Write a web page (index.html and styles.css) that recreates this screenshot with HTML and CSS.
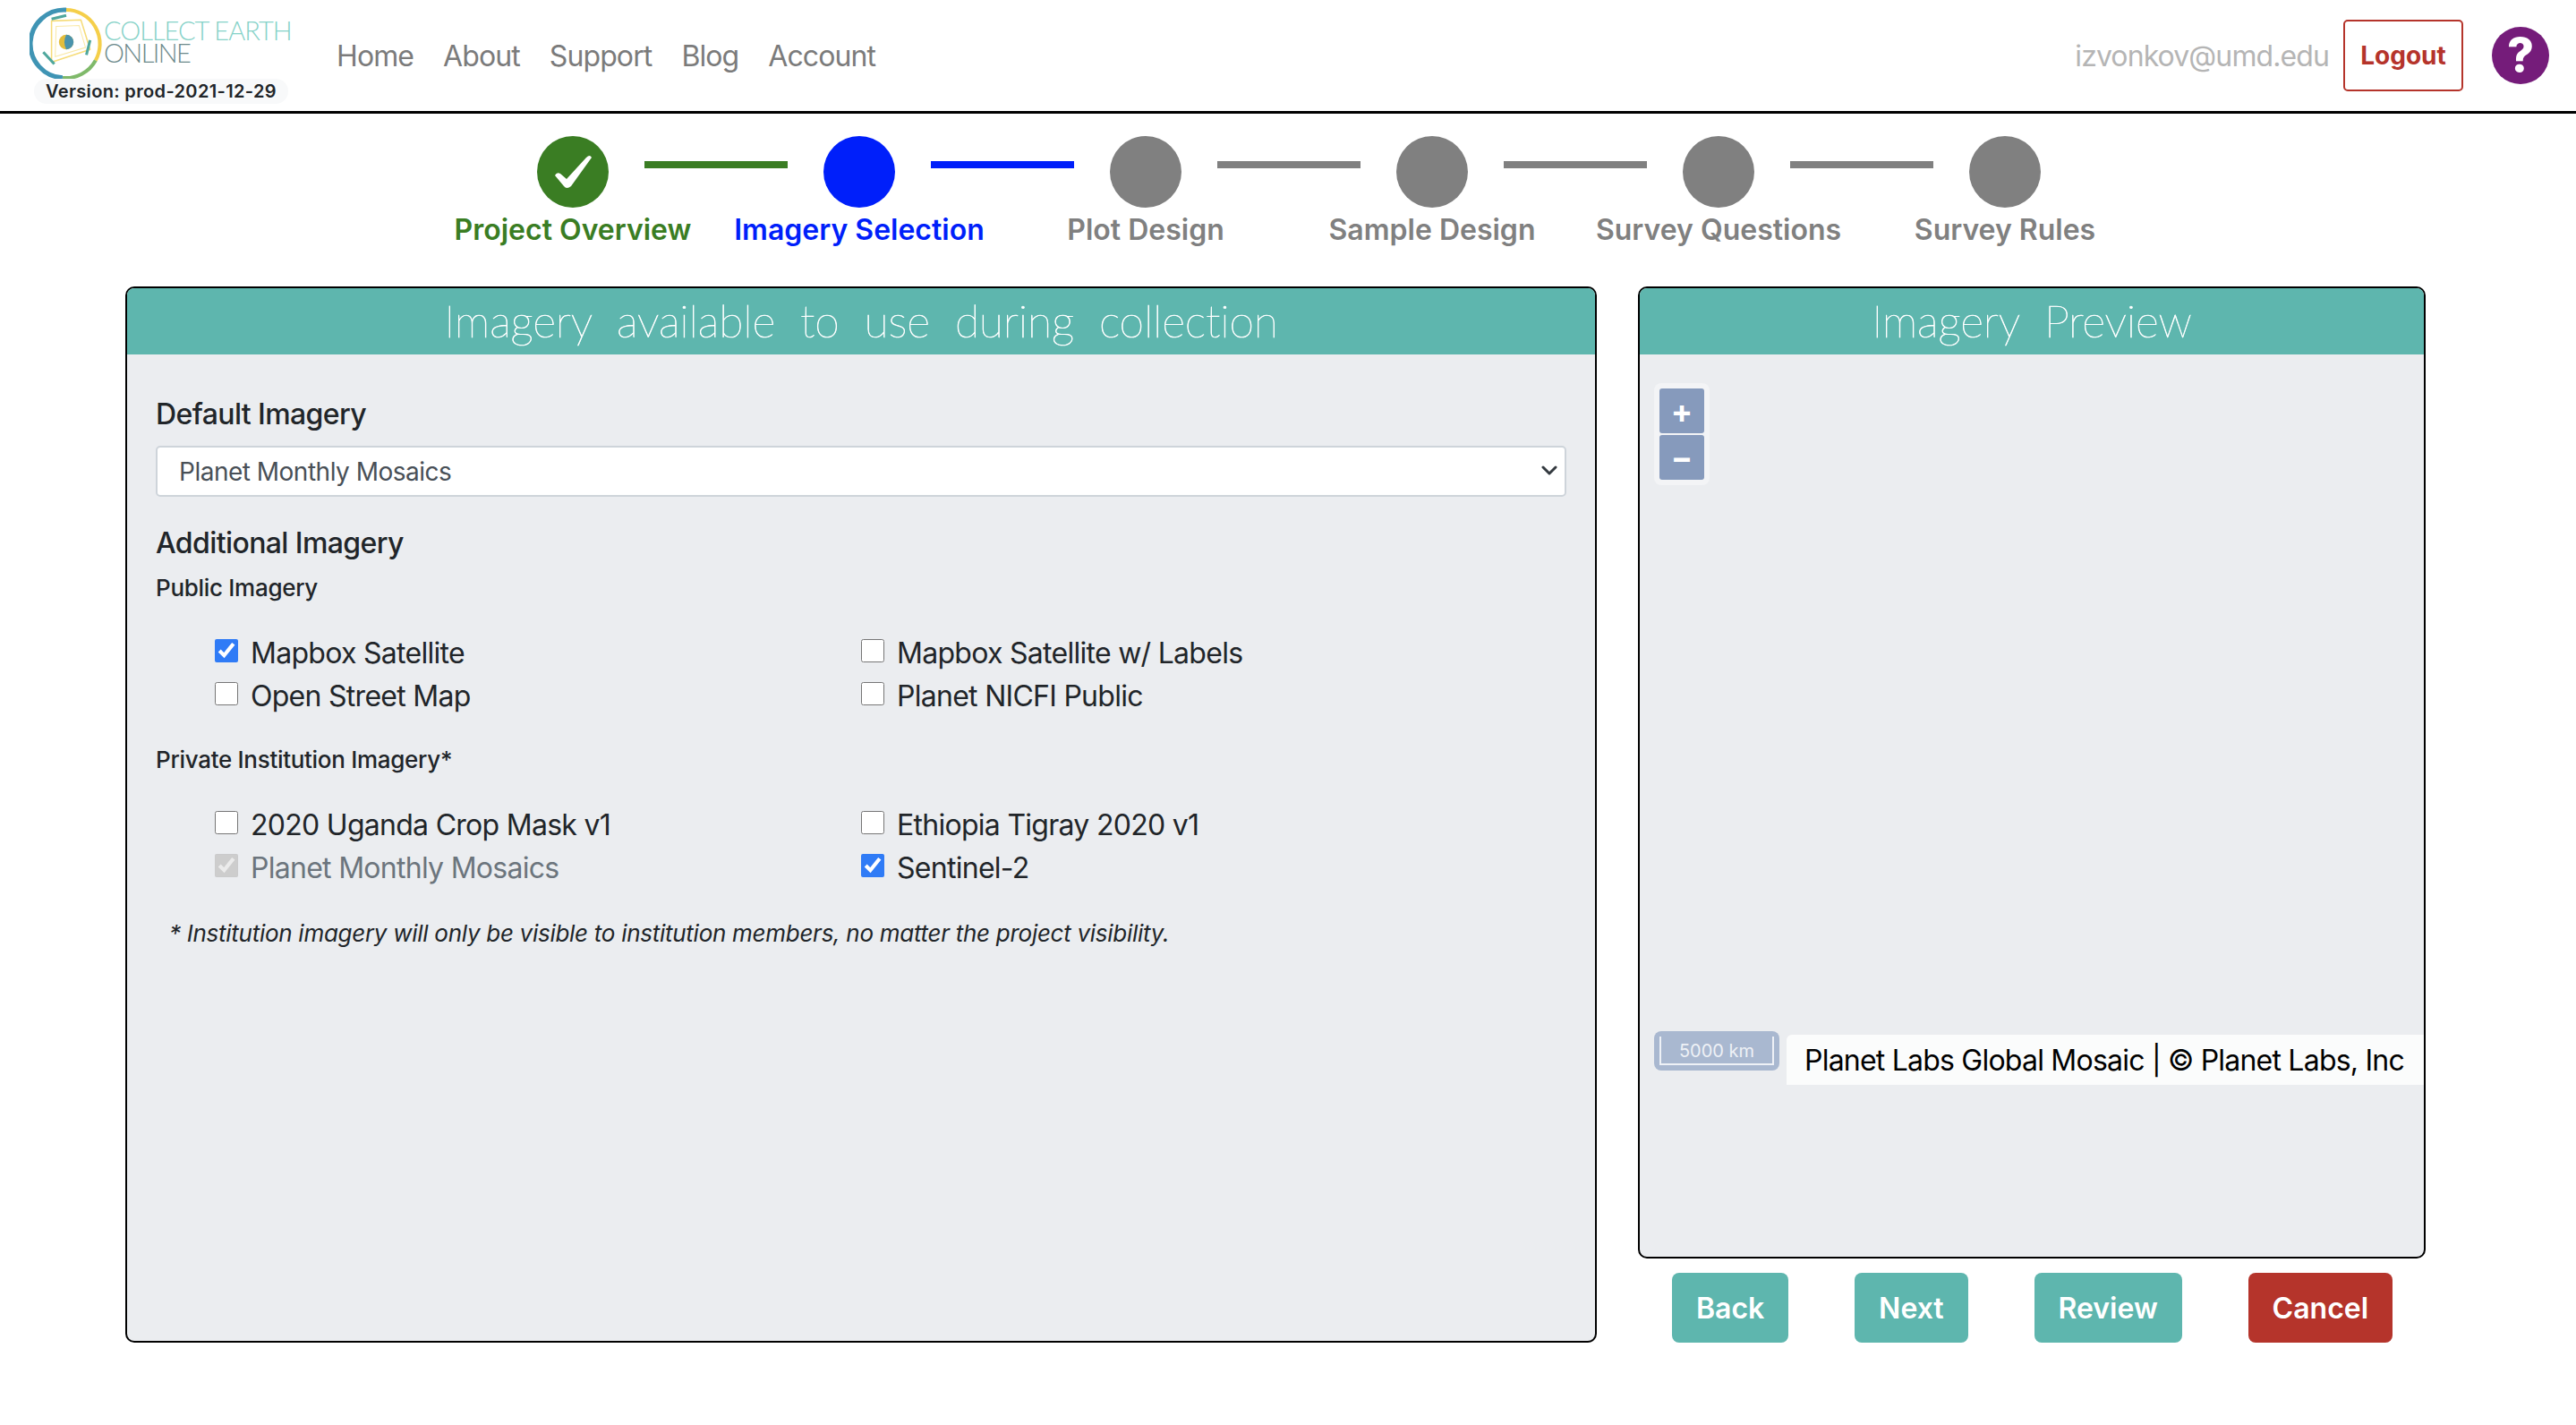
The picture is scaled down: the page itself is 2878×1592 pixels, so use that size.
FILE: index.html
```html
<!DOCTYPE html>
<html lang="en">
<head>
  <meta charset="UTF-8">
  <title>Collect Earth Online - Imagery Selection</title>
  <link rel="stylesheet" href="styles.css">
</head>
<body>

<header class="topbar">
  <div class="brand">
    <div class="brand-row">
      <svg class="brand-icon" viewBox="0 0 80 80" aria-hidden="true">
        <path d="M40 3 A37 37 0 0 1 72 58" fill="none" stroke="#f5cf4a" stroke-width="4"/>
        <path d="M72 58 A37 37 0 0 1 36 77" fill="none" stroke="#7fb96a" stroke-width="4"/>
        <path d="M36 77 A37 37 0 0 1 40 3" fill="none" stroke="#3f94b4" stroke-width="5"/>
        <path d="M24 15 L56 14 L66 46 L24 60 Z" fill="none" stroke="#f6dc78" stroke-width="1.5" stroke-linejoin="round"/>
        <path d="M29 21 L54 20 L61 44 L28 54 Z" fill="none" stroke="#f9e9a6" stroke-width="1"/>
        <path d="M24 13 L40 9" stroke="#4fa79d" stroke-width="3"/>
        <path d="M66 36 L62 52" stroke="#4fa79d" stroke-width="3"/>
        <path d="M15 49 L27 62" stroke="#4fa79d" stroke-width="3"/>
        <circle cx="40" cy="38" r="8" fill="#e3bd3c"/>
        <path d="M40 30 A8 8 0 0 1 40 46 Q36 38 40 30Z" fill="#4a93ad"/>
      </svg>
      <div class="brand-name">
        <span class="brand-collect">COLLECT EARTH</span>
        <span class="brand-online">ONLINE</span>
      </div>
    </div>
    <span class="version">Version: prod-2021-12-29</span>
  </div>
  <nav class="nav">
    <a>Home</a>
    <a>About</a>
    <a>Support</a>
    <a>Blog</a>
    <a>Account</a>
  </nav>
  <div class="user">
    <span class="email">izvonkov@umd.edu</span>
    <button class="logout">Logout</button>
    <span class="help">?</span>
  </div>
</header>

<section class="stepper">
  <div class="track">
    <span class="dot done">
      <svg viewBox="0 0 80 80" width="80" height="80" aria-hidden="true"><path d="M20 44 Q22 40 26 42 L33 48 L55 24 Q59 20 61 24 L38 56 Q33 60 30 56 Z" fill="#fff"/></svg>
    </span>
    <span class="bar done"></span>
    <span class="dot current"></span>
    <span class="bar current"></span>
    <span class="dot"></span>
    <span class="bar"></span>
    <span class="dot"></span>
    <span class="bar"></span>
    <span class="dot"></span>
    <span class="bar"></span>
    <span class="dot"></span>
  </div>
  <div class="step-labels">
    <span class="done-text">Project Overview</span>
    <span class="current-text">Imagery Selection</span>
    <span>Plot Design</span>
    <span>Sample Design</span>
    <span>Survey Questions</span>
    <span>Survey Rules</span>
  </div>
</section>

<main class="wizard">
  <section class="panel">
    <h2 class="panel-title">Imagery available to use during collection</h2>
    <div class="panel-body">
      <h3 class="heading">Default Imagery</h3>
      <div class="select-wrap">
        <select class="select">
          <option>Planet Monthly Mosaics</option>
        </select>
        <svg class="chevron" viewBox="0 0 20 12" aria-hidden="true"><path d="M3 2 L10 9 L17 2" fill="none" stroke="#343a40" stroke-width="3" stroke-linecap="round" stroke-linejoin="round"/></svg>
      </div>
      <h3 class="heading heading-second">Additional Imagery</h3>
      <h4 class="subheading">Public Imagery</h4>
      <div class="checks">
        <label class="check"><input type="checkbox" checked>Mapbox Satellite</label>
        <label class="check"><input type="checkbox">Mapbox Satellite w/ Labels</label>
        <label class="check"><input type="checkbox">Open Street Map</label>
        <label class="check"><input type="checkbox">Planet NICFI Public</label>
      </div>
      <h4 class="subheading subheading-second">Private Institution Imagery*</h4>
      <div class="checks">
        <label class="check"><input type="checkbox">2020 Uganda Crop Mask v1</label>
        <label class="check"><input type="checkbox">Ethiopia Tigray 2020 v1</label>
        <label class="check disabled"><input type="checkbox" checked disabled>Planet Monthly Mosaics</label>
        <label class="check"><input type="checkbox" checked>Sentinel-2</label>
      </div>
      <p class="note">* Institution imagery will only be visible to institution members, no matter the project visibility.</p>
    </div>
  </section>

  <div class="side">
    <section class="panel preview">
      <h2 class="panel-title">Imagery Preview</h2>
      <div class="map">
        <div class="zoom-control">
          <button class="zoom-btn">+</button>
          <button class="zoom-btn">&minus;</button>
        </div>
        <div class="scale"><span class="scale-inner">5000 km</span></div>
        <div class="attribution">Planet Labs Global Mosaic | © Planet Labs, Inc</div>
      </div>
    </section>
    <div class="actions">
      <button class="btn">Back</button>
      <button class="btn">Next</button>
      <button class="btn">Review</button>
      <button class="btn btn-cancel">Cancel</button>
    </div>
  </div>
</main>

</body>
</html>
```

FILE: styles.css
```css
* {
  box-sizing: border-box;
}
body {
  margin: 0;
  background: #fff;
  font-family: Inter, "Noto Sans", sans-serif;
  font-size: 32px;
  line-height: 48px;
  color: #212529;
}
h2, h3, h4, p {
  margin: 0;
  font-weight: 400;
}

/* Top bar */
.topbar {
  display: flex;
  align-items: flex-start;
  height: 127px;
  border-bottom: 3px solid #000;
}
.brand {
  display: flex;
  flex-direction: column;
  width: 376px;
  padding: 8px 0 0 33px;
}
.brand-row {
  display: flex;
  align-items: flex-start;
}
.brand-icon {
  width: 82px;
  height: 82px;
  flex-shrink: 0;
}
.brand-name {
  display: flex;
  flex-direction: column;
  margin: 13px 0 0 1px;
}
.brand-collect {
  font-family: Lato, sans-serif;
  font-weight: 300;
  font-size: 29px;
  line-height: 25px;
  letter-spacing: -1px;
  color: #86d2c8;
  white-space: nowrap;
}
.brand-online {
  font-family: Lato, sans-serif;
  font-weight: 300;
  font-size: 29px;
  line-height: 25px;
  letter-spacing: -1.6px;
  color: #6d8a8c;
}
.version {
  align-self: flex-start;
  margin: -2px 0 0 5px;
  padding: 0 13px;
  height: 28px;
  border-radius: 14px;
  background: #f8f9fa;
  font-size: 20px;
  font-weight: 600;
  letter-spacing: 0.35px;
  line-height: 28px;
  white-space: nowrap;
}
.nav {
  display: flex;
  gap: 33px;
  padding-top: 39px;
  color: #7b7b7b;
  letter-spacing: -0.9px;
}
.user {
  display: flex;
  align-items: flex-start;
  margin-left: auto;
  padding-right: 30px;
}
.email {
  margin: 39px 16px 0 0;
  color: #b5b5b5;
  letter-spacing: -0.9px;
}
.logout {
  width: 134px;
  height: 80px;
  margin-top: 22px;
  border: 2px solid #b5342b;
  border-radius: 5px;
  background: #fff;
  color: #b5342b;
  font-family: inherit;
  font-size: 28px;
  font-weight: 700;
}
.help {
  width: 64px;
  height: 64px;
  margin: 30px 0 0 32px;
  border-radius: 50%;
  background: #751c7a;
  color: #fff;
  font-size: 52px;
  font-weight: 800;
  line-height: 64px;
  text-align: center;
}

/* Wizard steps */
.stepper {
  padding: 25px 0 0 2px;
}
.track {
  display: flex;
  justify-content: center;
  gap: 40px;
}
.dot {
  display: flex;
  align-items: center;
  justify-content: center;
  width: 80px;
  height: 80px;
  border-radius: 50%;
  background: #808080;
}
.dot.done {
  background: #3a7d23;
}
.dot.current {
  background: #001ffa;
}
.bar {
  width: 160px;
  height: 8px;
  margin-top: 28px;
  background: #808080;
}
.bar.done {
  background: #3a7d23;
}
.bar.current {
  background: #001ffa;
}
.step-labels {
  display: grid;
  grid-template-columns: repeat(6, 320px);
  justify-content: center;
  margin-top: 1px;
  color: #808080;
  font-weight: 600;
  text-align: center;
}
.done-text {
  color: #3a7d23;
}
.current-text {
  color: #001ffa;
}

/* Main panels */
.wizard {
  display: grid;
  grid-template-columns: 1644px 880px;
  gap: 46px;
  height: 1180px;
  margin: 39px 0 0 140px;
}
.panel {
  display: flex;
  flex-direction: column;
  border: 2px solid #000;
  border-radius: 10px;
  background: #ebedf0;
  overflow: hidden;
}
.panel-title {
  height: 74px;
  background: #5eb6ae;
  color: #fff;
  font-family: Lato, sans-serif;
  font-size: 50px;
  font-weight: 100;
  -webkit-text-stroke: 0.7px #fff;
  letter-spacing: -0.2px;
  word-spacing: 14px;
  line-height: 72px;
  text-align: center;
}
.panel-body {
  padding: 43px 32px;
}
.heading {
  font-size: 32px;
  line-height: 48px;
  font-weight: 500;
  letter-spacing: -0.6px;
}
.heading-second {
  margin-top: 28px;
}
.subheading {
  margin-top: 6px;
  font-size: 26px;
  line-height: 40px;
  font-weight: 500;
  letter-spacing: -0.3px;
}
.subheading-second {
  margin-top: 27px;
}
.select-wrap {
  position: relative;
  margin-top: 11px;
}
.select {
  display: block;
  width: 100%;
  height: 57px;
  padding: 0 24px;
  border: 2px solid #ced4da;
  border-radius: 5px;
  background: #fff;
  color: #495057;
  font-family: inherit;
  font-size: 28px;
  letter-spacing: -0.5px;
  appearance: none;
}
.chevron {
  position: absolute;
  top: 22px;
  right: 9px;
  width: 20px;
  height: 12px;
}
.checks {
  display: grid;
  grid-template-columns: 722px 722px;
  margin-top: 29px;
  padding-left: 66px;
  letter-spacing: -0.72px;
}
.check {
  display: flex;
  align-items: center;
  gap: 14px;
}
.check input {
  width: 26px;
  height: 26px;
  margin: 0 0 6px;
  accent-color: #2f7bf6;
}
.check.disabled {
  color: #6c757d;
}
.note {
  margin-top: 29px;
  padding-left: 15px;
  font-size: 26px;
  font-style: italic;
  line-height: 40px;
  letter-spacing: -0.28px;
}

/* Preview map */
.side {
  display: flex;
  flex-direction: column;
}
.preview {
  height: 1086px;
}
.map {
  position: relative;
  flex: 1;
}
.zoom-control {
  position: absolute;
  top: 32px;
  left: 16px;
  display: flex;
  flex-direction: column;
  gap: 2px;
  padding: 6px;
  border-radius: 8px;
  background: rgba(255, 255, 255, 0.4);
}
.zoom-btn {
  width: 50px;
  height: 50px;
  padding: 0;
  border: 0;
  border-radius: 3px;
  background: #869abc;
  color: #fff;
  font-family: inherit;
  font-size: 36px;
  font-weight: 700;
  line-height: 50px;
}
.scale {
  position: absolute;
  top: 756px;
  left: 16px;
  width: 140px;
  height: 44px;
  padding: 6px;
  border-radius: 8px;
  background: #a9b8d0;
}
.scale-inner {
  display: block;
  height: 32px;
  border: 2px solid #eef1f6;
  border-top: 0;
  color: #eef1f6;
  font-size: 20px;
  line-height: 32px;
  text-align: center;
}
.attribution {
  position: absolute;
  top: 760px;
  right: 0;
  width: 712px;
  height: 56px;
  border-radius: 6px 0 0 0;
  background: #fbfcfc;
  color: #000;
  font-size: 32px;
  letter-spacing: -0.78px;
  line-height: 58px;
  padding-left: 20px;
  white-space: nowrap;
}
.actions {
  display: flex;
  justify-content: space-around;
  margin-top: 16px;
  padding-left: 1px;
}
.btn {
  height: 78px;
  padding: 0 27px;
  border: 0;
  border-radius: 8px;
  background: #5eb6ae;
  color: #fff;
  font-family: inherit;
  font-size: 32px;
  font-weight: 600;
}
.btn-cancel {
  background: #b5342b;
}
```
